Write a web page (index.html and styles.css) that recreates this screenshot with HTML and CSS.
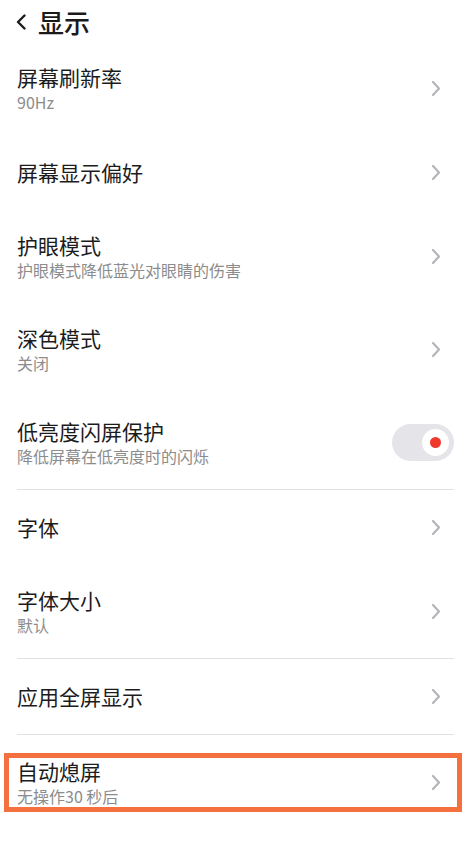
FILE: index.html
```html
<!DOCTYPE html>
<html lang="zh-CN">
<head>
<meta charset="utf-8">
<title>显示</title>
<link rel="stylesheet" href="styles.css">
</head>
<body>
<div class="page">
  <header class="header">
    <svg class="back" width="10" height="16" viewBox="0 0 10 16"><path d="M8.5 1.5 L2 8 L8.5 14.5" fill="none" stroke="#1c1c1c" stroke-width="2.4" stroke-linecap="round" stroke-linejoin="round"/></svg>
    <h1 class="title">显示</h1>
  </header>

  <div class="row tall">
    <div class="text"><div class="name">屏幕刷新率</div><div class="sub">90Hz</div></div>
    <svg class="chev" width="10" height="17" viewBox="0 0 10 17"><path d="M2 2 L8 8.5 L2 15" fill="none" stroke="#b4b4bb" stroke-width="2.2" stroke-linecap="round" stroke-linejoin="round"/></svg>
  </div>
  <div class="row">
    <div class="text"><div class="name">屏幕显示偏好</div></div>
    <svg class="chev" width="10" height="17" viewBox="0 0 10 17"><path d="M2 2 L8 8.5 L2 15" fill="none" stroke="#b4b4bb" stroke-width="2.2" stroke-linecap="round" stroke-linejoin="round"/></svg>
  </div>
  <div class="row tall">
    <div class="text"><div class="name">护眼模式</div><div class="sub">护眼模式降低蓝光对眼睛的伤害</div></div>
    <svg class="chev" width="10" height="17" viewBox="0 0 10 17"><path d="M2 2 L8 8.5 L2 15" fill="none" stroke="#b4b4bb" stroke-width="2.2" stroke-linecap="round" stroke-linejoin="round"/></svg>
  </div>
  <div class="row tall">
    <div class="text"><div class="name">深色模式</div><div class="sub">关闭</div></div>
    <svg class="chev" width="10" height="17" viewBox="0 0 10 17"><path d="M2 2 L8 8.5 L2 15" fill="none" stroke="#b4b4bb" stroke-width="2.2" stroke-linecap="round" stroke-linejoin="round"/></svg>
  </div>
  <div class="row tall">
    <div class="text"><div class="name">低亮度闪屏保护</div><div class="sub">降低屏幕在低亮度时的闪烁</div></div>
    <div class="toggle"><div class="knob"><div class="dot"></div></div></div>
  </div>

  <div class="divider"></div>

  <div class="row">
    <div class="text"><div class="name">字体</div></div>
    <svg class="chev" width="10" height="17" viewBox="0 0 10 17"><path d="M2 2 L8 8.5 L2 15" fill="none" stroke="#b4b4bb" stroke-width="2.2" stroke-linecap="round" stroke-linejoin="round"/></svg>
  </div>
  <div class="row tall">
    <div class="text"><div class="name">字体大小</div><div class="sub">默认</div></div>
    <svg class="chev" width="10" height="17" viewBox="0 0 10 17"><path d="M2 2 L8 8.5 L2 15" fill="none" stroke="#b4b4bb" stroke-width="2.2" stroke-linecap="round" stroke-linejoin="round"/></svg>
  </div>

  <div class="divider"></div>

  <div class="row">
    <div class="text"><div class="name">应用全屏显示</div></div>
    <svg class="chev" width="10" height="17" viewBox="0 0 10 17"><path d="M2 2 L8 8.5 L2 15" fill="none" stroke="#b4b4bb" stroke-width="2.2" stroke-linecap="round" stroke-linejoin="round"/></svg>
  </div>

  <div class="divider"></div>

  <div class="highlight">
    <div class="row boxed">
      <div class="text"><div class="name">自动熄屏</div><div class="sub">无操作30 秒后</div></div>
      <svg class="chev" width="10" height="17" viewBox="0 0 10 17"><path d="M2 2 L8 8.5 L2 15" fill="none" stroke="#b4b4bb" stroke-width="2.2" stroke-linecap="round" stroke-linejoin="round"/></svg>
    </div>
  </div>
</div>
</body>
</html>
```

FILE: styles.css
```css
* { box-sizing: border-box; }

html, body {
  margin: 0;
  padding: 0;
  background: #ffffff;
}

body {
  font-family: "Noto Sans CJK SC", "Noto Sans", sans-serif;
  color: #1c1c1c;
}

.page {
  width: 468px;
  min-height: 841px;
  background: #ffffff;
}

.header {
  height: 42px;
  display: flex;
  align-items: center;
  padding-left: 16px;
  gap: 12px;
  padding-top: 2px;
}

.back {
  flex: none;
}

.title {
  margin: 0;
  font-size: 26px;
  font-weight: 500;
  line-height: 32px;
  color: #1a1a1a;
}

.row {
  height: 75px;
  display: flex;
  align-items: center;
  justify-content: space-between;
  padding: 0 14px 0 17px;
}

.row.tall {
  height: 93px;
}

.text {
  display: flex;
  flex-direction: column;
}

.name {
  font-size: 21px;
  line-height: 27px;
  color: #1c1c1c;
}

.sub {
  font-size: 16px;
  line-height: 22px;
  color: #8c8c8c;
}

.chev {
  flex: none;
  margin-right: 13px;
}

.toggle {
  width: 62px;
  height: 37px;
  border-radius: 19px;
  background: #e4e4e9;
  display: flex;
  align-items: center;
  justify-content: flex-end;
  padding-right: 5px;
}

.knob {
  width: 27px;
  height: 27px;
  border-radius: 50%;
  background: #ffffff;
  display: flex;
  align-items: center;
  justify-content: center;
}

.dot {
  width: 11px;
  height: 11px;
  border-radius: 50%;
  background: #f0392c;
}

.divider {
  height: 1px;
  background: #e2e2e6;
  margin: 0 14px 0 17px;
}

.highlight {
  margin: 18px 6px 0 4px;
  border: 5px solid #f4703f;
  height: 59px;
}

.row.boxed {
  height: 49px;
  padding: 0 3px 0 8px;
}
```
